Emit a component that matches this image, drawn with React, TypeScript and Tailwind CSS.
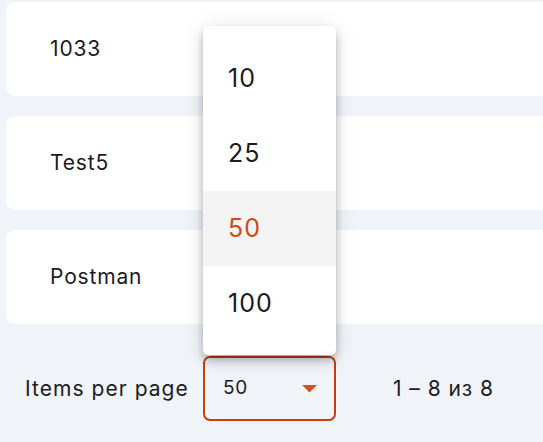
import React from "react";

const rows = ["1033", "Test5", "Postman"];
const options = ["10", "25", "50", "100"];

export default function App() {
  return (
    <div
      className="relative h-[442px] w-[543px] overflow-hidden bg-[#f0f3f8] text-[#1c1b1f]"
      style={{ fontFamily: "Inter, 'Noto Sans', sans-serif" }}
    >
      <div className="flex flex-col gap-[20px] pl-[6px] pt-[2px]">
        {rows.map((r) => (
          <div
            key={r}
            className="flex h-[94px] w-[580px] items-center rounded-[9px] bg-white pl-[44px] text-[21px] tracking-[0.04em]"
          >
            {r}
          </div>
        ))}
      </div>

      <div className="mt-[32px] flex items-center pl-[25px]">
        <span className="w-[163px] whitespace-nowrap text-[21px] tracking-[0.05em]">Items per page</span>
        <div className="ml-[15px] flex h-[65px] w-[133px] items-center justify-between rounded-[7px] border-2 border-[#c6400a] pl-[18px] pr-[17px]">
          <span className="text-[19px] tracking-[0.04em]">50</span>
          <svg width="15" height="8" viewBox="0 0 15 8">
            <path d="M0 0 L15 0 L7.5 7.5 Z" fill="#d4501c" />
          </svg>
        </div>
        <span className="ml-[57px] whitespace-nowrap text-[21px] tracking-[0.045em]">1 – 8 из 8</span>
      </div>

      <div className="absolute left-[203px] top-[26px] w-[133px] rounded-[5px] bg-white pb-[14px] pt-[15px] shadow-[0_4px_8px_-2px_rgba(0,0,0,0.2),0_7px_10px_0_rgba(0,0,0,0.14),0_3px_22px_0_rgba(0,0,0,0.12)]">
        {options.map((o) => (
          <div
            key={o}
            className={
              o === "50"
                ? "flex h-[75px] items-center bg-[#f4f4f4] pl-[25px] text-[25px] tracking-[0.04em] text-[#cf4a16]"
                : "flex h-[75px] items-center pl-[25px] text-[25px] tracking-[0.04em]"
            }
          >
            {o}
          </div>
        ))}
      </div>
    </div>
  );
}
